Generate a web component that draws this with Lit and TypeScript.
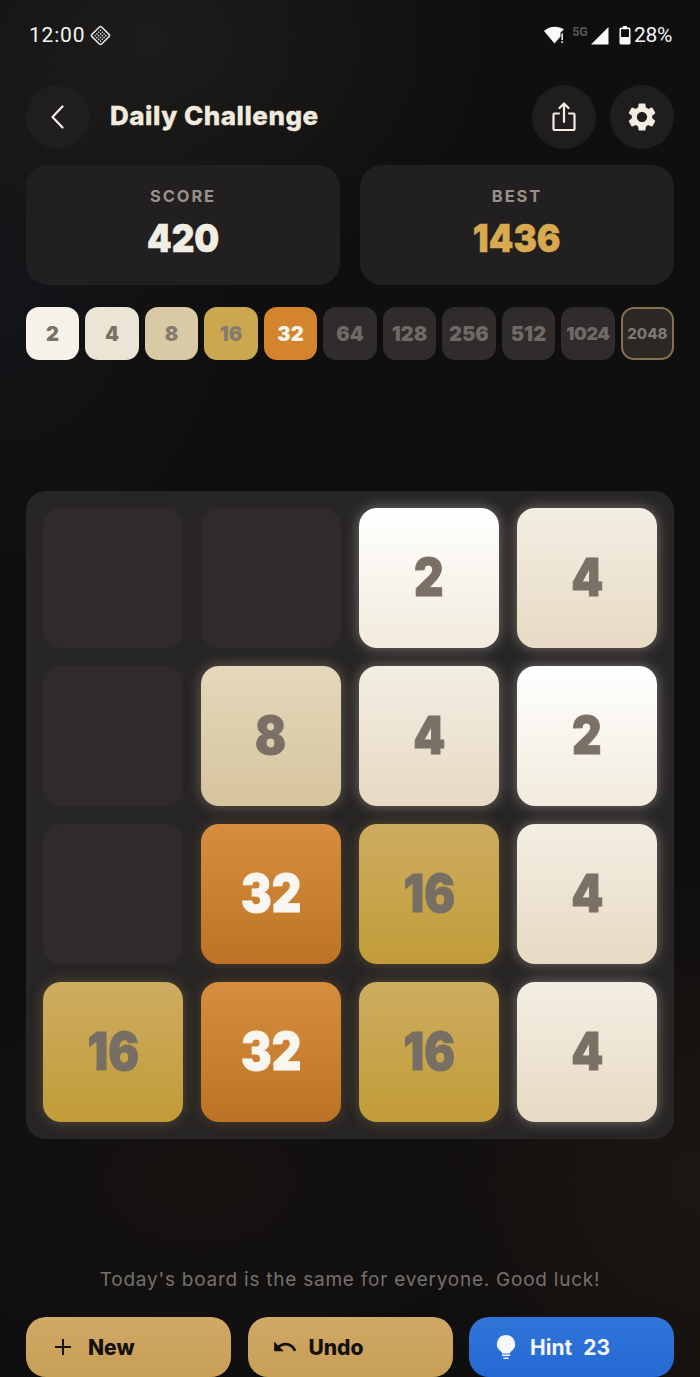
import { LitElement, html, css, svg } from "lit";
import { customElement } from "lit/decorators.js";

const BOARD = [0, 0, 2, 4, 0, 8, 4, 2, 0, 32, 16, 4, 16, 32, 16, 4];
const CHIPS = [2, 4, 8, 16, 32, 64, 128, 256, 512, 1024, 2048];

@customElement("app-root")
export class AppRoot extends LitElement {
  static styles = css`
    :host {
      display: block;
      width: 700px;
      height: 1377px;
      overflow: hidden;
      font-family: Inter, "Liberation Sans", sans-serif;
      color: #f2ede2;
      background:
        radial-gradient(340px 260px at 150px 40px, rgba(60, 58, 52, 0.3), transparent),
        radial-gradient(240px 280px at 0px 290px, rgba(40, 56, 80, 0.15), transparent),
        radial-gradient(300px 300px at 700px 1180px, rgba(90, 60, 30, 0.16), transparent),
        radial-gradient(300px 200px at 200px 1180px, rgba(70, 50, 30, 0.1), transparent),
        #100f0f;
    }
    .status {
      height: 84px;
      box-sizing: border-box;
      padding: 22px 28px 0 29px;
      display: flex;
      justify-content: space-between;
      align-items: flex-start;
      font-family: Roboto, sans-serif;
      font-size: 21px;
      line-height: 27px;
      color: #f4f4f2;
    }
    .st-left, .st-right { display: flex; align-items: center; }
    .st-left { gap: 5px; }
    .time { letter-spacing: 0.8px; }
    .fiveg { font-size: 12.5px; font-weight: 700; color: #555; margin: -8px 3px 0 6px; line-height: 14px; }
    .pct { margin-left: 3px; letter-spacing: -0.3px; }

    .header {
      height: 65px;
      margin: 0 26px;
      display: flex;
      align-items: center;
      gap: 20px;
    }
    .round {
      width: 64px;
      height: 64px;
      border-radius: 50%;
      background: #1f1d1e;
      display: flex;
      align-items: center;
      justify-content: center;
      flex: none;
    }
    .title {
      flex: 1;
      font-size: 26px;
      font-weight: 800;
      letter-spacing: 0.5px;
      line-height: 32px;
      margin-top: -2px;
      color: #f0ebdf;
      -webkit-text-stroke: 0.3px currentColor;
    }
    .hactions { display: flex; gap: 14px; }

    .scores {
      display: grid;
      grid-template-columns: 1fr 1fr;
      gap: 20px;
      margin: 16px 26px 0;
    }
    .card {
      height: 120px;
      border-radius: 22px;
      background: #211f20;
      display: flex;
      flex-direction: column;
      align-items: center;
      padding-top: 21px;
      box-sizing: border-box;
    }
    .label {
      font-size: 16.5px;
      font-weight: 700;
      letter-spacing: 1.9px;
      line-height: 20px;
      color: #98928a;
    }
    .value {
      font-size: 39px;
      font-weight: 900;
      line-height: 47px;
      margin-top: 8px;
      color: #f2ede2;
      transform: scaleX(0.9);
      -webkit-text-stroke: 0.5px currentColor;
    }
    .value.best { color: #d9a94f; }

    .chips {
      display: grid;
      grid-template-columns: repeat(11, 1fr);
      gap: 6.3px;
      margin: 22px 26px 0;
    }
    .chip {
      height: 53px;
      border-radius: 13px;
      box-sizing: border-box;
      display: flex;
      align-items: center;
      justify-content: center;
      font-size: 20px;
      font-weight: 900;
      color: #7a7268;
      background: #2f2c2b;
    }
    .chip.locked { color: #6f6a66; }
    .chip.v2 { background: #f6f2ea; }
    .chip.v4 { background: #ece4d4; }
    .chip.v8 { background: #d9c9a5; color: #857c6c; }
    .chip.v16 { background: #cba850; color: #857c6e; }
    .chip.v32 { background: #d4842c; color: #f9f6f0; }
    .chip.small { font-size: 18px; letter-spacing: -0.4px; }
    .chip.goal {
      font-size: 15px;
      font-weight: 800;
      background: #2a2725;
      border: 2px solid #84704a;
      color: #7d7872;
    }

    .board {
      margin: 131px 26px 0;
      padding: 17px;
      border-radius: 20px;
      background: #272525;
      display: grid;
      grid-template-columns: repeat(4, 140px);
      grid-auto-rows: 140px;
      gap: 18px;
    }
    .cell {
      border-radius: 18px;
      background: #2f2b2a;
      display: flex;
      align-items: center;
      justify-content: center;
      font-size: 52px;
      font-weight: 900;
      color: #7a7066;
    }
    .num {
      margin-top: -2px;
      transform: scaleX(0.88);
      -webkit-text-stroke: 1px currentColor;
    }
    .cell.t2 {
      background: linear-gradient(180deg, #ffffff, #f2ebdd);
      box-shadow: 0 0 14px rgba(240, 235, 225, 0.4);
    }
    .cell.t4 {
      background: linear-gradient(180deg, #f3eee3, #e8dac3);
      box-shadow: 0 0 14px rgba(235, 225, 205, 0.4);
    }
    .cell.t8 {
      background: linear-gradient(180deg, #e4d7bb, #d6c49c);
      box-shadow: 0 0 14px rgba(220, 205, 170, 0.35);
    }
    .cell.t16 {
      background: linear-gradient(180deg, #cdac60, #c29c38);
      box-shadow: 0 0 14px rgba(200, 165, 80, 0.3);
      color: #776f63;
    }
    .cell.t32 {
      background: linear-gradient(180deg, #d68e3e, #bd7325);
      box-shadow: 0 0 14px rgba(205, 130, 50, 0.25);
      color: #f9f6f0;
    }

    .hint {
      margin-top: 129px;
      text-align: center;
      font-size: 19px;
      line-height: 24px;
      color: #76716c;
      letter-spacing: 0.76px;
    }
    .actions {
      display: grid;
      grid-template-columns: repeat(3, 1fr);
      gap: 16.5px;
      margin: 25px 26px 0;
    }
    .btn {
      height: 60px;
      border-radius: 20px;
      background: linear-gradient(180deg, #d1a866, #c79f55);
      display: flex;
      align-items: center;
      gap: 14px;
      padding: 0 0 0 26px;
      font-size: 21px;
      font-weight: 800;
      color: #14110d;
    }
    .btn.undo { gap: 10px; padding-left: 23px; }
    .btn.blue {
      background: linear-gradient(180deg, #2f76d8, #2469d4);
      color: #f5f7fb;
      font-weight: 700;
      gap: 14px;
      padding-left: 27px;
    }
    .count { margin-left: -3px; }
    svg { display: block; flex: none; }
  `;

  private diamond() {
    const dots = [] as unknown[];
    for (let r = 0; r < 4; r++)
      for (let c = 0; c < 4; c++)
        dots.push(svg`<rect x=${5.9 + c * 2.4} y=${5.9 + r * 2.4} width="1.3" height="1.3" fill="#e8e8e6"/>`);
    return html`<svg width="21" height="21" viewBox="0 0 20 20">
      <g transform="rotate(45 10 10)">
        <rect x="3.5" y="3.5" width="13" height="13" rx="1.5" fill="none" stroke="#e8e8e6" stroke-width="1.4"/>
        ${dots}
      </g>
    </svg>`;
  }

  private statusRight() {
    return html`<div class="st-right">
      <svg width="22" height="20" viewBox="0 0 22 20">
        <path d="M0 5C5.500-.500 14.500-.500 20 3.500L16.500 6.500V10.500L10.500 17.500z" fill="#fafafa"/>
        <rect x="17.400" y="7.500" width="1.500" height="6.500" fill="#fafafa"/>
        <rect x="17.400" y="15.200" width="1.500" height="1.800" fill="#fafafa"/>
      </svg>
      <span class="fiveg">5G</span>
      <svg width="18" height="18" viewBox="0 0 18 18"><path d="M0 17.500L17.500 0V17.500z" fill="#fafafa"/></svg>
      <svg style="margin-left:10px" width="12" height="19" viewBox="0 0 12 19">
        <path fill-rule="evenodd" d="M4 0h4v1.500h2A1.500 1.500 0 0 1 11.500 3v14a1.500 1.500 0 0 1-1.500 1.500H2A1.500 1.500 0 0 1 .5 17V3A1.500 1.500 0 0 1 2 1.500h2zM2 3.200V11h8V3.200z" fill="#fafafa"/>
      </svg>
      <span class="pct">28%</span>
    </div>`;
  }

  render() {
    return html`
      <div class="status">
        <div class="st-left"><span class="time">12:00</span>${this.diamond()}</div>
        ${this.statusRight()}
      </div>

      <div class="header">
        <div class="round">
          <svg width="24" height="24" viewBox="0 0 24 24"><path d="M17 2L7 12.500 17 23" transform="translate(-.5 -.5)" fill="none" stroke="#f2ede2" stroke-width="2.200" stroke-linecap="round" stroke-linejoin="round"/></svg>
        </div>
        <div class="title">Daily Challenge</div>
        <div class="hactions">
          <div class="round">
            <svg width="26" height="30" viewBox="0 0 26 30" fill="none" stroke="#f2ede2" stroke-width="2.200" stroke-linecap="round" stroke-linejoin="round">
              <path d="M8 11.500H3.500a1 1 0 0 0-1 1V27a1 1 0 0 0 1 1h19a1 1 0 0 0 1-1V12.500a1 1 0 0 0-1-1H18"/>
              <path d="M13 20V2"/>
              <path d="M8.500 6L13 1.500 17.500 6"/>
            </svg>
          </div>
          <div class="round">
            <svg width="34" height="34" viewBox="0 0 24 24"><path fill="#f2ede2" d="M19.14 12.94c.04-.3.06-.61.06-.94 0-.32-.02-.64-.07-.94l2.03-1.58c.18-.14.23-.41.12-.61l-1.92-3.32c-.12-.22-.37-.29-.59-.22l-2.39.96c-.5-.38-1.03-.7-1.62-.94l-.36-2.54c-.04-.24-.24-.41-.48-.41h-3.84c-.24 0-.43.17-.47.41l-.36 2.54c-.59.24-1.13.57-1.62.94l-2.39-.96c-.22-.08-.47 0-.59.22L2.74 8.87c-.12.21-.08.47.12.61l2.03 1.58c-.05.3-.09.63-.09.94s.02.64.07.94l-2.03 1.58c-.18.14-.23.41-.12.61l1.92 3.32c.12.22.37.29.59.22l2.39-.96c.5.38 1.03.7 1.62.94l.36 2.54c.05.24.24.41.48.41h3.84c.24 0 .44-.17.47-.41l.36-2.54c.59-.24 1.13-.56 1.62-.94l2.39.96c.22.08.47 0 .59-.22l1.92-3.32c.12-.22.07-.47-.12-.61l-2.01-1.58zM12 15.6c-1.98 0-3.6-1.62-3.6-3.6s1.62-3.6 3.6-3.6 3.6 1.62 3.6 3.6-1.62 3.6-3.6 3.6z"/></svg>
          </div>
        </div>
      </div>

      <div class="scores">
        <div class="card"><div class="label">SCORE</div><div class="value">420</div></div>
        <div class="card"><div class="label">BEST</div><div class="value best">1436</div></div>
      </div>

      <div class="chips">
        ${CHIPS.map((v) => {
          const reached = v <= 32;
          const cls = [
            "chip",
            reached ? `v${v}` : "locked",
            v === 1024 ? "small" : "",
            v === 2048 ? "goal" : "",
          ].join(" ");
          return html`<div class=${cls}>${v}</div>`;
        })}
      </div>

      <div class="board">
        ${BOARD.map((v) => html`<div class="cell ${v ? `t${v}` : ""}">${v ? html`<span class="num">${v}</span>` : ""}</div>`)}
      </div>

      <div class="hint">Today's board is the same for everyone. Good luck!</div>

      <div class="actions">
        <div class="btn">
          <svg width="22" height="22" viewBox="0 0 22 22"><path d="M11 3v16M3 11h16" stroke="#14110d" stroke-width="2" fill="none"/></svg>
          New
        </div>
        <div class="btn undo">
          <svg width="28" height="26" viewBox="0 0 24 24"><path fill="#14110d" d="M12.5 8c-2.65 0-5.05.99-6.9 2.6L2 7v9h9l-3.62-3.62c1.39-1.16 3.16-1.88 5.12-1.88 3.54 0 6.55 2.31 7.6 5.5l2.37-.78C21.08 11.03 17.15 8 12.5 8z"/></svg>
          Undo
        </div>
        <div class="btn blue">
          <svg width="20" height="26" viewBox="0 0 20 26"><path fill="#f5f7fb" d="M10 1a9 9 0 0 0-5 16.500c.5.4 1 1 1 2h8c0-1 .5-1.600 1-2A9 9 0 0 0 10 1z"/><path d="M6.500 21.300h7M8 24.300h4" stroke="#f5f7fb" stroke-width="1.500" stroke-linecap="round"/></svg>
          <span>Hint</span><span class="count">23</span>
        </div>
      </div>
    `;
  }
}
